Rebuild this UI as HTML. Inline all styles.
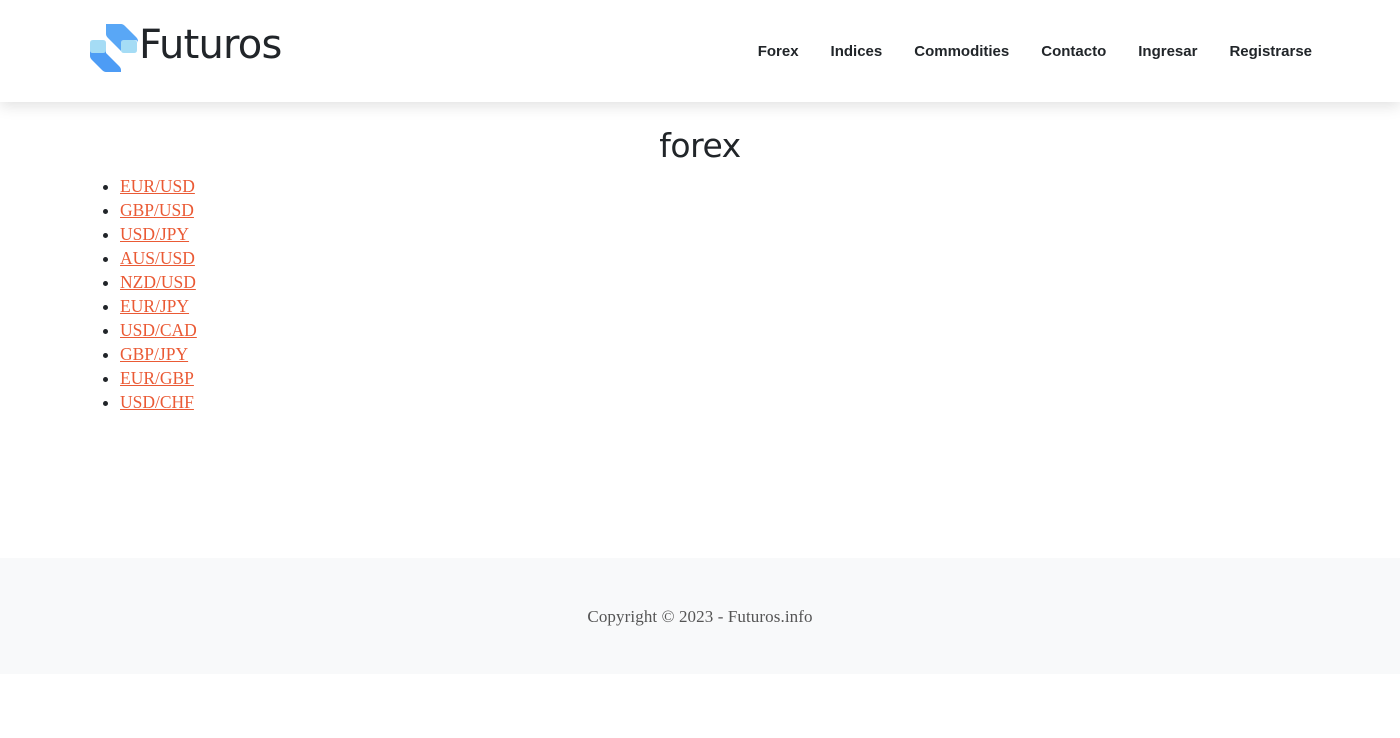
<!DOCTYPE html>
<html><head><meta charset="utf-8"><style>
body{margin:0;background:#fff;font-family:"Liberation Sans",sans-serif;}
header{height:102px;background:#fff;box-shadow:0 4px 14px rgba(0,0,0,.12);position:relative;}
.logo{position:absolute;left:90px;top:24px;}
.brand{position:absolute;left:139px;top:22px;font-size:40px;color:#212529;font-family:"DejaVu Sans","Liberation Sans",sans-serif;letter-spacing:-0.8px;}
nav{position:absolute;right:88px;top:43px;font-size:15px;font-weight:bold;color:#212529;}
nav span{margin-left:32px;}
h1{text-align:center;font-weight:normal;font-size:33px;margin:0;position:absolute;top:126px;width:100%;color:#212529;font-family:"DejaVu Sans",sans-serif;letter-spacing:-0.5px}
ul{position:absolute;top:174px;left:0;margin:0;padding-left:120px;font-family:"Liberation Serif",serif;font-size:17.5px;line-height:24px;color:#212529}
a{color:#ea5a35;text-decoration:underline;}
footer{position:absolute;top:558px;left:0;width:100%;height:116px;background:#f8f9fa;text-align:center;font-family:"Liberation Serif",serif;font-size:17px;color:#555;line-height:118px;letter-spacing:0.1px}
</style></head><body>
<header>
<svg class="logo" width="48" height="48" viewBox="0 0 48 48">
<path d="M0 19q0-3 3-3h10q3 0 3 3v10H3q-3 0-3-3z" fill="#a5dcf5"/>
<path d="M31 19q0-3 3-3h10q3 0 3 3v7q0 3-3 3H34q-3 0-3-3z" fill="#a5dcf5"/>
<path d="M16 0h15q2 0 4 2l11 11q2 2 2 4v2q0-3-3-3H34q-3 0-3 3v8L18 14q-2-2-2-4z" fill="#59a7f6"/>
<path d="M0 26q0 3 3 3h10q3 0 3-3v3L29 42q2 2 2 4v2H16q-2 0-4-2L2 36q-2-2-2-4z" fill="#4d9cf5"/>
</svg>
<div class="brand">Futuros</div>
<nav><span>Forex</span><span>Indices</span><span>Commodities</span><span>Contacto</span><span>Ingresar</span><span>Registrarse</span></nav>
</header>
<h1>forex</h1>
<ul>
<li><a>EUR/USD</a></li><li><a>GBP/USD</a></li><li><a>USD/JPY</a></li><li><a>AUS/USD</a></li><li><a>NZD/USD</a></li><li><a>EUR/JPY</a></li><li><a>USD/CAD</a></li><li><a>GBP/JPY</a></li><li><a>EUR/GBP</a></li><li><a>USD/CHF</a></li>
</ul>
<footer>Copyright © 2023 - Futuros.info</footer>
</body></html>
